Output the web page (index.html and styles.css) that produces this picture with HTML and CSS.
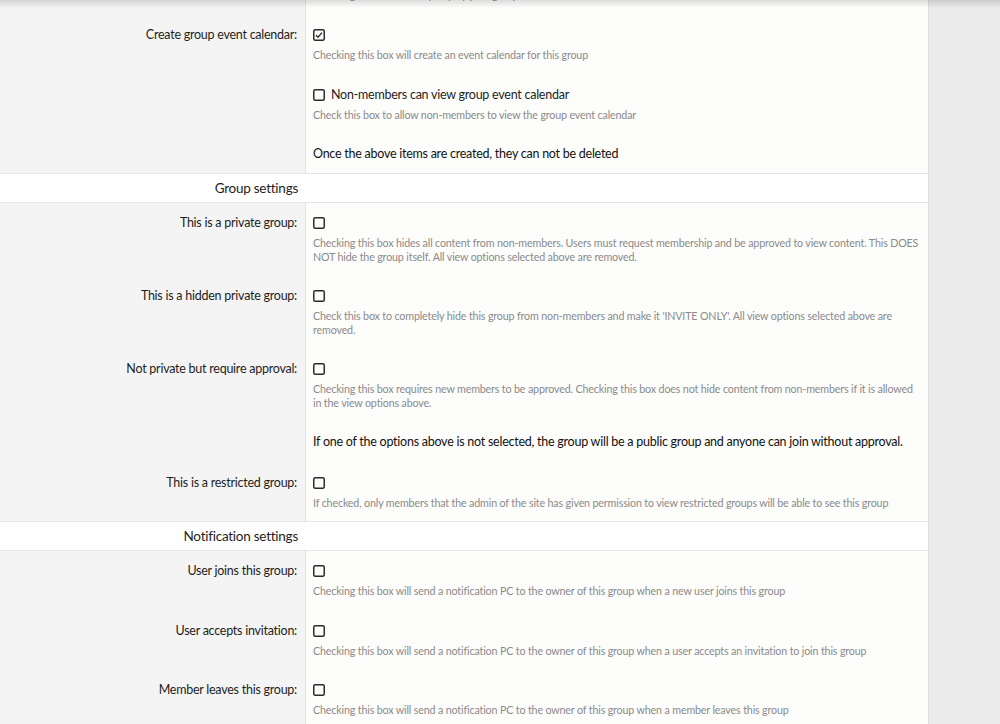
FILE: index.html
```html
<!DOCTYPE html>
<html>
<head>
<meta charset="utf-8">
<link rel="stylesheet" href="styles.css">
</head>
<body>
<div class="topshadow"></div>
<div class="page">
  <div class="main">
    <div class="row cut">
      <div class="label"></div>
      <div class="field"><p class="help">Checking this box will only display your group</p></div>
    </div>

    <div class="row">
      <div class="label">Create group event calendar:</div>
      <div class="field">
        <div class="item">
          <div class="line"><span class="cb checked"><svg width="12" height="12" viewBox="0 0 12 12"><rect x="0.75" y="0.75" width="10.5" height="10.5" rx="1.5" fill="none" stroke="#2b2b2b" stroke-width="1.5"/><path d="M3 6.2l2 2 4-4.6" fill="none" stroke="#2b2b2b" stroke-width="1.4"/></svg></span></div>
          <p class="help">Checking this box will create an event calendar for this group</p>
        </div>
        <div class="item">
          <div class="line"><span class="cb"><svg width="12" height="12" viewBox="0 0 12 12"><rect x="0.75" y="0.75" width="10.5" height="10.5" rx="1.5" fill="none" stroke="#2b2b2b" stroke-width="1.5"/></svg></span><span class="cbtext">Non-members can view group event calendar</span></div>
          <p class="help">Check this box to allow non-members to view the group event calendar</p>
        </div>
        <div class="line note tight">Once the above items are created, they can not be deleted</div>
      </div>
    </div>

    <div class="section"><div class="stitle">Group settings</div><div></div></div>

    <div class="row">
      <div class="label">This is a private group:</div>
      <div class="field">
        <div class="line"><span class="cb"><svg width="12" height="12" viewBox="0 0 12 12"><rect x="0.75" y="0.75" width="10.5" height="10.5" rx="1.5" fill="none" stroke="#2b2b2b" stroke-width="1.5"/></svg></span></div>
        <p class="help">Checking this box hides all content from non-members. Users must request membership and be approved to view content. This DOES<br>NOT hide the group itself. All view options selected above are removed.</p>
      </div>
    </div>

    <div class="row">
      <div class="label">This is a hidden private group:</div>
      <div class="field">
        <div class="line"><span class="cb"><svg width="12" height="12" viewBox="0 0 12 12"><rect x="0.75" y="0.75" width="10.5" height="10.5" rx="1.5" fill="none" stroke="#2b2b2b" stroke-width="1.5"/></svg></span></div>
        <p class="help">Check this box to completely hide this group from non-members and make it 'INVITE ONLY'. All view options selected above are<br>removed.</p>
      </div>
    </div>

    <div class="row">
      <div class="label">Not private but require approval:</div>
      <div class="field">
        <div class="item wide">
          <div class="line"><span class="cb"><svg width="12" height="12" viewBox="0 0 12 12"><rect x="0.75" y="0.75" width="10.5" height="10.5" rx="1.5" fill="none" stroke="#2b2b2b" stroke-width="1.5"/></svg></span></div>
          <p class="help">Checking this box requires new members to be approved. Checking this box does not hide content from non-members if it is allowed<br>in the view options above.</p>
        </div>
        <div class="line note">If one of the options above is not selected, the group will be a public group and anyone can join without approval.</div>
      </div>
    </div>

    <div class="row last">
      <div class="label">This is a restricted group:</div>
      <div class="field">
        <div class="line"><span class="cb"><svg width="12" height="12" viewBox="0 0 12 12"><rect x="0.75" y="0.75" width="10.5" height="10.5" rx="1.5" fill="none" stroke="#2b2b2b" stroke-width="1.5"/></svg></span></div>
        <p class="help">If checked, only members that the admin of the site has given permission to view restricted groups will be able to see this group</p>
      </div>
    </div>

    <div class="section"><div class="stitle">Notification settings</div><div></div></div>

    <div class="row">
      <div class="label">User joins this group:</div>
      <div class="field">
        <div class="line"><span class="cb"><svg width="12" height="12" viewBox="0 0 12 12"><rect x="0.75" y="0.75" width="10.5" height="10.5" rx="1.5" fill="none" stroke="#2b2b2b" stroke-width="1.5"/></svg></span></div>
        <p class="help">Checking this box will send a notification PC to the owner of this group when a new user joins this group</p>
      </div>
    </div>

    <div class="row">
      <div class="label">User accepts invitation:</div>
      <div class="field">
        <div class="line"><span class="cb"><svg width="12" height="12" viewBox="0 0 12 12"><rect x="0.75" y="0.75" width="10.5" height="10.5" rx="1.5" fill="none" stroke="#2b2b2b" stroke-width="1.5"/></svg></span></div>
        <p class="help">Checking this box will send a notification PC to the owner of this group when a user accepts an invitation to join this group</p>
      </div>
    </div>

    <div class="row">
      <div class="label">Member leaves this group:</div>
      <div class="field">
        <div class="line"><span class="cb"><svg width="12" height="12" viewBox="0 0 12 12"><rect x="0.75" y="0.75" width="10.5" height="10.5" rx="1.5" fill="none" stroke="#2b2b2b" stroke-width="1.5"/></svg></span></div>
        <p class="help">Checking this box will send a notification PC to the owner of this group when a member leaves this group</p>
      </div>
    </div>
  </div>
  <div class="side"></div>
</div>
</body>
</html>
```

FILE: styles.css
```css
html, body {
  margin: 0;
  padding: 0;
  background: #ebebeb;
  overflow: hidden;
}
body {
  font-family: "Segoe UI", Lato, "Liberation Sans", sans-serif;
  font-size: 12.5px;
  letter-spacing: -0.25px;
  color: #1e1e1e;
}
.topshadow {
  position: fixed;
  top: 0;
  left: 0;
  right: 0;
  height: 8px;
  background: linear-gradient(rgba(0,0,0,0.13), rgba(0,0,0,0));
  z-index: 5;
}
.page {
  display: flex;
  min-height: 724px;
}
.main {
  width: 928px;
  border-right: 1px solid #dedede;
  background: #fdfdfc;
  display: flex;
  flex-direction: column;
}
.side {
  flex: 1;
  background: #ebebeb;
}
.row {
  display: grid;
  grid-template-columns: 306px 1fr;
}
.label {
  background: #f4f4f4;
  border-right: 1px solid #e4e4e4;
  text-align: right;
  padding: 10px 8px 12.4px 0;
  line-height: 20px;
  box-sizing: border-box;
}
.field {
  padding: 10px 8px 12.4px 7px;
  min-width: 0;
}
.row.last .label,
.row.last .field {
  padding-bottom: 11px;
}
.row.cut {
  height: 15px;
}
.row.cut .field {
  height: 15px;
  box-sizing: border-box;
  padding-top: 0;
  padding-bottom: 13px;
  display: flex;
  align-items: flex-end;
}
.row.cut .label {
  padding: 0;
}
.line {
  display: flex;
  align-items: center;
  height: 20px;
  line-height: 20px;
  white-space: nowrap;
}
.cb {
  display: inline-flex;
  width: 12px;
  height: 12px;
}
.cbtext {
  margin-left: 6px;
}
.help {
  margin: 3px 0 0 0;
  font-size: 10.7px;
  letter-spacing: -0.15px;
  line-height: 14px;
  color: #8a8a8a;
  white-space: nowrap;
}
.item {
  margin-bottom: 22.5px;
}
.item.wide {
  margin-bottom: 22px;
}
.note {
  color: #111;
  margin-bottom: -1.4px;
}
.note.tight {
  margin-bottom: -3.8px;
}
.section {
  display: grid;
  grid-template-columns: 306px 1fr;
  background: #ffffff;
  border-top: 1px solid #e6e6e6;
  border-bottom: 1px solid #e6e6e6;
  height: 30px;
  box-sizing: border-box;
}
.stitle {
  text-align: right;
  padding-right: 8px;
  font-size: 13.5px;
  line-height: 28px;
  color: #1e1e1e;
}
```
